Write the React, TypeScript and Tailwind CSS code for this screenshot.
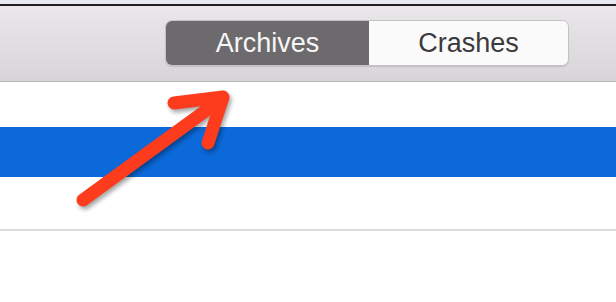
export default function App() {
  return (
    <div className="relative w-[616px] h-[302px] overflow-hidden bg-white font-['Liberation_Sans',Arial,sans-serif]">
      {/* window edge */}
      <div className="h-[4px] bg-[#e8e8f2]" />
      <div className="h-[2px] bg-[#1f1f24]" />

      {/* toolbar */}
      <div className="h-[76px] flex items-center justify-end pr-[47px] pb-px bg-gradient-to-b from-[#e9e7ea] to-[#d7d5d8] border-b border-[#b9b7ba]">
        <div className="flex w-[404px] h-[46px] rounded-[7px] overflow-hidden border border-[#c4c2c5] shadow-[0_1px_1px_rgba(0,0,0,0.12)]">
          <div className="w-[203px] flex items-center justify-center bg-[#6c6a6c] text-[#f6f6f6] text-[27px]">
            Archives
          </div>
          <div className="flex-1 flex items-center justify-center bg-[#fbfafb] text-[#3b3a3d] text-[27px]">
            Crashes
          </div>
        </div>
      </div>

      {/* list */}
      <div className="h-[45px] bg-white" />
      <div className="h-[50px] bg-[#0b69d9]" />
      <div className="h-[54px] bg-white border-b-2 border-[#dcdcdc]" />

      {/* annotation arrow */}
      <svg
        className="absolute left-0 top-0 pointer-events-none"
        width="616"
        height="302"
        style={{ filter: "drop-shadow(2px 3px 2px rgba(0,0,0,0.35))" }}
      >
        <g
          stroke="#fd3c1e"
          strokeWidth="13"
          strokeLinecap="round"
          strokeLinejoin="round"
          fill="none"
        >
          <line x1="83" y1="200" x2="219" y2="101" />
          <polyline points="174,103 223,97 208,143" />
        </g>
      </svg>
    </div>
  );
}
